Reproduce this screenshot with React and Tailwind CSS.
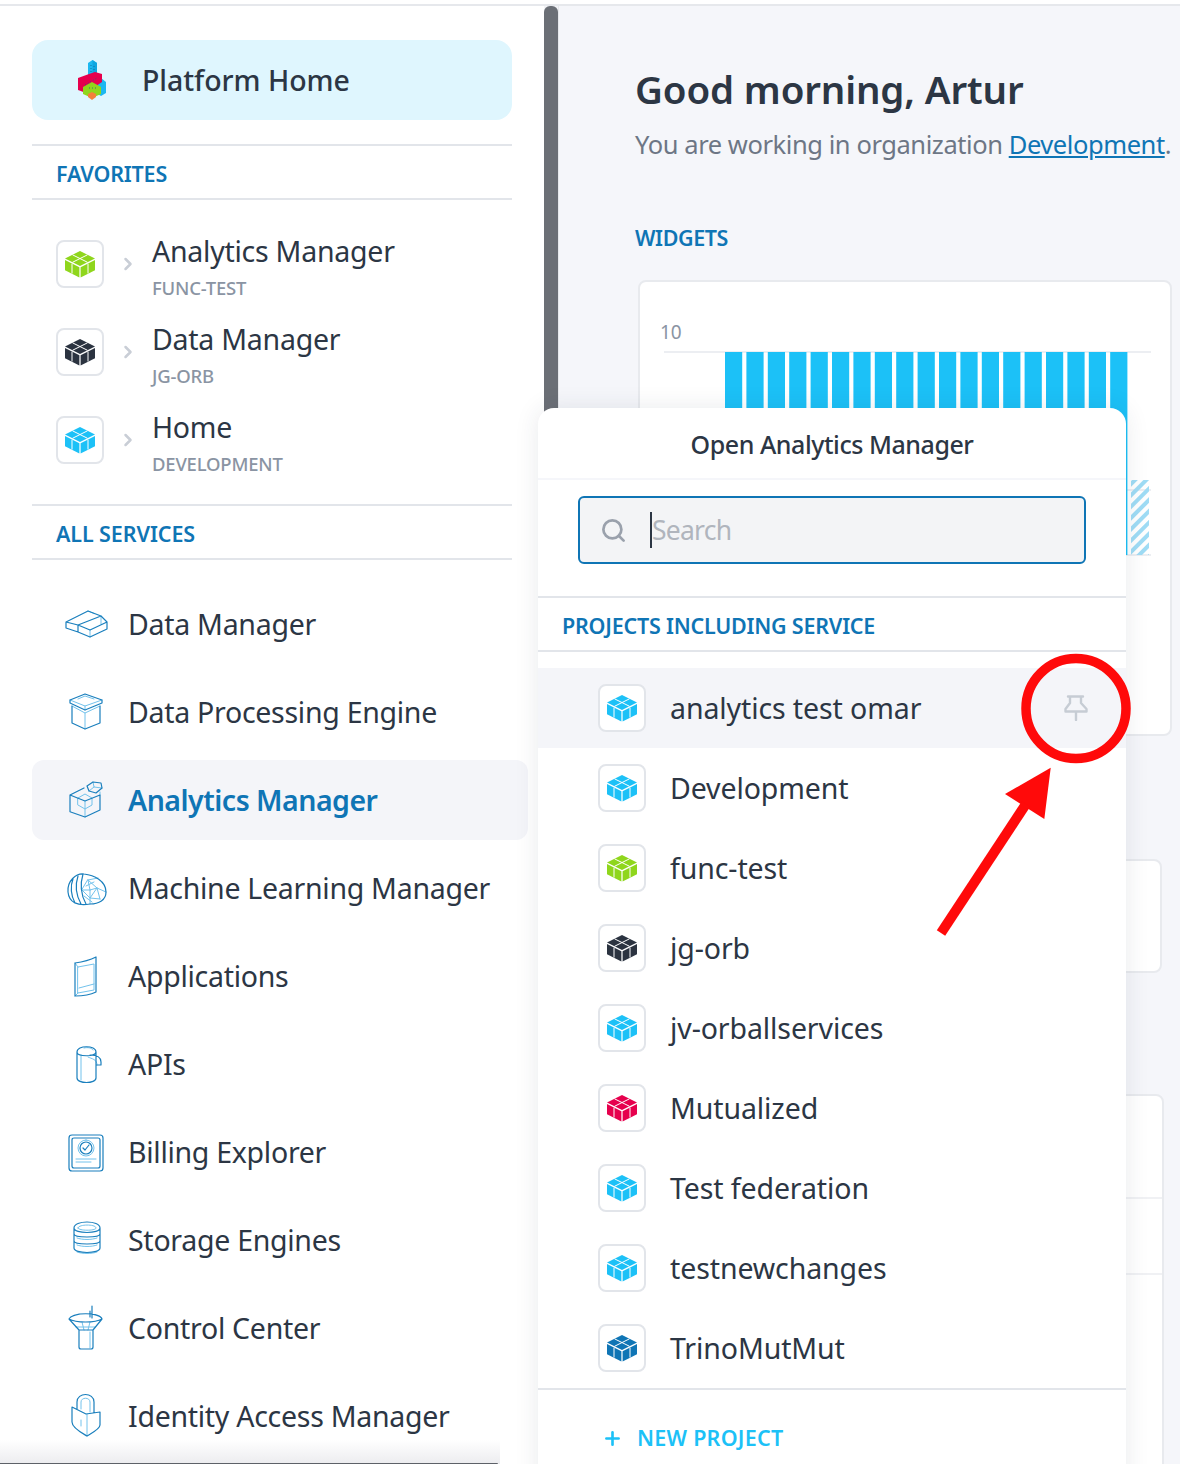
import { Search, Plus, ChevronRight } from "lucide-react";

const favorites = [
  { name: "Analytics Manager", sub: "FUNC-TEST", color: "#8fd61c" },
  { name: "Data Manager", sub: "JG-ORB", color: "#2b3340" },
  { name: "Home", sub: "DEVELOPMENT", color: "#1cc1f7" },
];

const projects = [
  { name: "analytics test omar", color: "#1cc1f7" },
  { name: "Development", color: "#1cc1f7" },
  { name: "func-test", color: "#8fd61c" },
  { name: "jg-orb", color: "#2b3340" },
  { name: "jv-orballservices", color: "#1cc1f7" },
  { name: "Mutualized", color: "#e6004d" },
  { name: "Test federation", color: "#1cc1f7" },
  { name: "testnewchanges", color: "#1cc1f7" },
  { name: "TrinoMutMut", color: "#0f75b5" },
];

const bars = Array.from({ length: 19 }, (_, i) => 85 + i * 21.4);

function Cube({ color }) {
  return (
    <svg width="32" height="28" viewBox="0 0 32 28">
      <path d="M16 1 31 8.5 16 16 1 8.5Z" fill={color} />
      <path d="M1 10 15.4 17.2V27.5L1 20.3Z" fill={color} />
      <path d="M31 10 16.6 17.2V27.5L31 20.3Z" fill={color} />
      <path d="M8.5 4.8 23.5 12.3M23.5 4.8 8.5 12.3M8 13.8V23.5M24 13.8V23.5" stroke="#fff" strokeWidth="1" fill="none" />
    </svg>
  );
}

function Tile({ color }) {
  return (
    <div className="flex h-12 w-12 shrink-0 items-center justify-center rounded-lg border-2 border-[#e2e5ea] bg-white">
      <Cube color={color} />
    </div>
  );
}

function LineIcon({ dark, light }) {
  return (
    <svg width="44" height="44" viewBox="0 0 44 44" fill="none" strokeLinejoin="round" strokeLinecap="round" className="shrink-0 overflow-visible">
      <path d={light} stroke="#72c2ec" strokeWidth="1" />
      <path d={dark} stroke="#1a7fbd" strokeWidth="1.2" />
    </svg>
  );
}

const services = [
  {
    name: "Data Manager",
    dark: "M2 20 24 9 37 14 43 20V27L26 35 14 30 2 26ZM2 20 14 23 37 14M14 23V30M14 23 26 28 43 20",
    light: "M26 28V35M24 9 30 11.5M37 14 37 22",
  },
  {
    name: "Data Processing Engine",
    dark: "M6 10 21 4 38 10V13L21 20 6 13ZM8 16V33L21 39 36 33V16",
    light: "M8 16 21 23 36 16M21 23V39M6 10 21 16 38 10M21 16V20M14 9 21 6 30 9",
  },
  {
    name: "Analytics Manager",
    dark: "M6 17 20 10M6 17 21 23 36 17V32L21 39 6 33.7ZM23 8 29 4 37 5 38 10 32 15 25 13Z",
    light: "M21 23V39M14 20 21 16 28 20V27L21 31 14 27ZM29 4 30 9 38 10M30 9 25 13M36 17V14",
  },
  {
    name: "Machine Learning Manager",
    dark: "M4 26C3 15 12 7 20 8 30 9 42 15 42 26 42 34 35 38 26 38 14 40 5 37 4 26ZM9 13C6 20 7 30 11 37M14 10C11 19 12 29 17 38M19 8C16 18 17 29 22 38",
    light: "M24 14 33 22 26 32 18 24ZM33 22 42 26M24 14 34 12M18 24 26 24 33 22M26 24 26 38M24 14 26 24M33 22 36 33M26 32 36 33M22 20 30 16M20 30 28 36",
  },
  {
    name: "Applications",
    dark: "M11 9C18 8 26 6 32 3V38C26 41 18 42 11 42Z",
    light: "M14 13 30 10V36L14 39ZM15 34 30 30M11 9 14 13M11 42 14 39",
  },
  {
    name: "APIs",
    dark: "M13 10C13 3 32 3 32 10V36C32 42 13 42 13 36ZM13 10C13 15 32 15 32 10M26 13C31 13 37 14 37 20V23H33",
    light: "M17 13V38M20 6C24 5 28 6 29 8M24 15C28 17 33 17 33 23",
  },
  {
    name: "Billing Explorer",
    dark: "M8 5H36Q39 5 39 8V38Q39 41 36 41H8Q5 41 5 38V8Q5 5 8 5ZM10 8H34Q36 8 36 10V36Q36 38 34 38H10Q8 38 8 36V10Q8 8 10 8ZM22 12A6 6 0 1 0 22 24 6 6 0 1 0 22 12ZM19 18 21 20 25 15",
    light: "M22 10A8 8 0 1 0 22 26 8 8 0 1 0 22 10ZM12 29H32M12 32H27",
  },
  {
    name: "Storage Engines",
    dark: "M10 10C10 2 36 2 36 10 36 16 10 16 10 10ZM10 10V16C10 20 36 20 36 16V10M10 16V23C10 27 36 27 36 23V16M10 23V30C10 36 36 36 36 30V23",
    light: "M14 10C14 6 32 6 32 10 32 13 14 13 14 10ZM13 20C18 22 28 22 33 20M13 27C18 29 28 29 33 27M13 34C18 36 28 36 33 34",
  },
  {
    name: "Control Center",
    dark: "M5 13C8 6 36 6 38 13L29 24H15ZM5 13C12 17 31 17 38 13M15 24V41Q15 43 17 43H27Q29 43 29 41V24M28 0V12M26 5V11",
    light: "M12 21H31M18 16 20 24M26 16 24 24M26 26V42",
  },
  {
    name: "Identity Access Manager",
    dark: "M8 13 22 20 36 18V31C36 35 28 39 23 42 18 39 8 34 8 28ZM13 15V8C13 -2 30 -2 30 8V19",
    light: "M23 20V42M17 15V8C17 3 26 3 26 8V18M17 26V32",
  },
];

function PlatformLogo() {
  return (
    <svg width="30" height="40" viewBox="0 0 30 40">
      <path d="M11 3 15.5 0 20 3V16H11Z" fill="#1cb8f0" />
      <path d="M15.5 0 20 3V16H15.5Z" fill="#0fa6e0" />
      <path d="M19 21 24 18 29 22V33L24 36 19 33Z" fill="#1cb8f0" />
      <path d="M1 18 12 14 18 12 25 14V22L9 33 1 30Z" fill="#e6004d" />
      <path d="M6 27 15 22 24 27V34L15 38 6 34Z" fill="#8fd61c" />
      <path d="M11 34 15 32 19 34V37L15 40 11 37Z" fill="#f4803a" />
      <path d="M14 5V12M17 6V11M8 25 20 18M12 28H20" stroke="#12608f" strokeWidth="0.8" strokeDasharray="1 2" fill="none" />
    </svg>
  );
}

function PinIcon() {
  return (
    <svg width="24" height="26" viewBox="0 0 24 26" fill="none" stroke="#c6ccd4" strokeWidth="2.4" strokeLinejoin="round" strokeLinecap="round" className="ml-auto mr-[38px]">
      <path d="M4 1.5H19M6 2V8L1.5 14V16.5H22.5V14L17 8V2M12 17V25" />
    </svg>
  );
}

export default function App() {
  return (
    <div className="relative h-[1464px] w-[1180px] overflow-hidden bg-white font-['Noto_Sans',sans-serif] text-[#2c3644]">
      <div className="mt-1 flex h-full border-t-2 border-[#e6e8ec]">
        {/* SIDEBAR */}
        <aside className="relative w-[544px] shrink-0 pl-8 pr-8 pt-[34px]">
          <div className="flex h-20 w-[480px] items-center gap-[35px] rounded-2xl bg-[#dff6fe] pl-[45px]">
            <PlatformLogo />
            <span className="text-[28.5px] font-medium tracking-[-0.05px]">Platform Home</span>
          </div>

          <div className="mt-6 flex h-[56px] w-[480px] items-center border-y-2 border-[#e2e5ea] pl-6 pt-1 text-[21.5px] font-semibold tracking-[-0.2px] text-[#0f75b5]">
            FAVORITES
          </div>

          <div className="mt-5 w-[480px]">
            {favorites.map((f) => (
              <div key={f.name} className="flex h-[88px] items-center pl-6">
                <Tile color={f.color} />
                <ChevronRight size={20} strokeWidth={3} className="ml-[14px] text-[#c9ced6]" />
                <div className="ml-[14px] pt-1">
                  <div className="h-[40px] text-[28.5px] leading-[40px] tracking-[-0.25px]">{f.name}</div>
                  <div className="mt-1 text-[18.5px] font-medium leading-[26px] tracking-[-0.2px] text-[#8a94a3]">{f.sub}</div>
                </div>
              </div>
            ))}
          </div>

          <div className="mt-5 flex h-[56px] w-[480px] items-center border-y-2 border-[#e2e5ea] pl-6 pt-1 text-[21.5px] font-semibold tracking-[-0.1px] text-[#0f75b5]">
            ALL SERVICES
          </div>

          <div className="mt-6 flex w-[496px] flex-col gap-2">
            {services.map((s) => {
              const active = s.name === "Analytics Manager";
              return (
                <div
                  key={s.name}
                  className={
                    "flex h-20 items-center gap-5 rounded-xl pl-[32px] text-[28.5px] " +
                    (active ? "bg-[#f4f5f9] font-semibold tracking-[-0.5px] text-[#0f75b5]" : "tracking-[-0.28px]")
                  }
                >
                  <LineIcon dark={s.dark} light={s.light} />
                  <span>{s.name}</span>
                </div>
              );
            })}
          </div>

          <div className="absolute bottom-1 left-0 h-6 w-[500px] bg-gradient-to-b from-transparent to-[#ececef]" />
          <div className="absolute bottom-[3px] left-0 h-[2px] w-[498px] rounded-r bg-[#5d6168]" />
        </aside>

        {/* SCROLLBAR */}
        <div className="w-[15px] shrink-0 border-r border-[#e6e8ec] bg-[#f3f4f7]">
          <div className="h-[420px] w-[14px] rounded-t-md bg-[#6b6f76]" />
        </div>

        {/* MAIN */}
        <main className="min-w-0 flex-1 overflow-hidden bg-[#f5f6fa] pl-[76px] pt-[55px]">
          <h1 className="whitespace-nowrap text-[38.5px] font-semibold leading-[56px] tracking-[-0.15px]">Good morning, Artur</h1>
          <p className="mt-[9px] whitespace-nowrap text-[25.5px] leading-9 tracking-[-0.43px] text-[#6d7685]">
            You are working in organization{" "}
            <span className="text-[#0f75b5] underline">Development</span>.
          </p>
          <div className="mt-[61px] text-[21.5px] font-semibold leading-[30px] tracking-[-0.4px] text-[#0f75b5]">WIDGETS</div>

          <div className="ml-[3px] mt-[27px] h-[456px] w-[534px] rounded-lg border-2 border-[#e8eaee] bg-white">
            <svg width="530" height="452" viewBox="0 0 530 452">
              <text x="20" y="57" fontSize="19" fill="#8a94a3">10</text>
              <path d="M24 70H511M24 208H511M24 273H511" stroke="#eceef2" strokeWidth="2" />
              {bars.map((x) => (
                <rect key={x} x={x} y="70" width="17.2" height="203" fill="#1cc1f7" />
              ))}
              <defs>
                <pattern id="hatch" width="8" height="8" patternUnits="userSpaceOnUse" patternTransform="rotate(45)">
                  <rect width="4" height="8" fill="#9fdcf5" />
                </pattern>
              </defs>
              <rect x="491" y="198" width="18" height="75" fill="url(#hatch)" />
            </svg>
          </div>

          <div className="ml-[3px] mt-[123px] h-[114px] w-[524px] rounded-lg border-2 border-[#e8eaee] bg-white" />

          <div className="ml-[3px] mt-[121px] h-[400px] w-[526px] rounded-lg border-2 border-[#e8eaee] bg-white">
            <div className="mt-[101px] h-[78px] border-y-2 border-[#f0f1f4]" />
          </div>
        </main>
      </div>

      {/* POPOVER */}
      <div className="absolute left-[538px] top-[408px] h-[1100px] w-[588px] rounded-t-2xl bg-white shadow-[0_0_24px_rgba(40,50,70,0.10)]">
        <div className="flex h-[72px] items-center justify-center border-b-2 border-[#f5f6fa] pt-1 text-[25px] font-medium tracking-[-0.45px]">
          Open Analytics Manager
        </div>
        <div className="mx-10 mt-[16px] flex h-[68px] w-[508px] items-center rounded-md border-2 border-[#0f75b5] bg-[#f3f4f6] pl-5">
          <Search size={27} strokeWidth={2.4} className="text-[#9aa1ac]" />
          <span className="ml-[23px] h-[36px] w-[2px] bg-[#2c3644]" />
          <span className="pt-[2px] text-[26.5px] tracking-[-0.75px] text-[#b0b5bd]">Search</span>
        </div>
        <div className="mt-8 flex h-[56px] items-center border-y-2 border-[#e2e5ea] pl-6 pt-1 text-[21.5px] font-semibold tracking-[-0.23px] text-[#0f75b5]">
          PROJECTS INCLUDING SERVICE
        </div>
        <div className="mt-4">
          {projects.map((p, i) => (
            <div key={p.name} className={"flex h-20 items-center pl-[60px] " + (i === 0 ? "bg-[#f4f5f9]" : "")}>
              <Tile color={p.color} />
              <span className="ml-6 text-[28.5px] tracking-[-0.1px]">{p.name}</span>
              {i === 0 && <PinIcon />}
            </div>
          ))}
        </div>
        <div className="flex h-[98px] items-center border-t-2 border-[#e2e5ea] pl-[64px] text-[21.5px] font-semibold tracking-[0.25px] text-[#1cc1f7]">
          <Plus size={21} strokeWidth={3} />
          <span className="ml-[14px]">NEW PROJECT</span>
        </div>
      </div>

      {/* ANNOTATION */}
      <svg className="pointer-events-none absolute left-0 top-0" width="1180" height="1464" viewBox="0 0 1180 1464">
        <circle cx="1076" cy="708.5" r="50" fill="none" stroke="#ff0a0a" strokeWidth="9.5" />
        <path d="M1050.7 767.7 1005 794 1044.3 819Z" fill="#ff0a0a" />
        <path d="M1026 804 941 933" stroke="#ff0a0a" strokeWidth="10" fill="none" />
      </svg>
    </div>
  );
}
